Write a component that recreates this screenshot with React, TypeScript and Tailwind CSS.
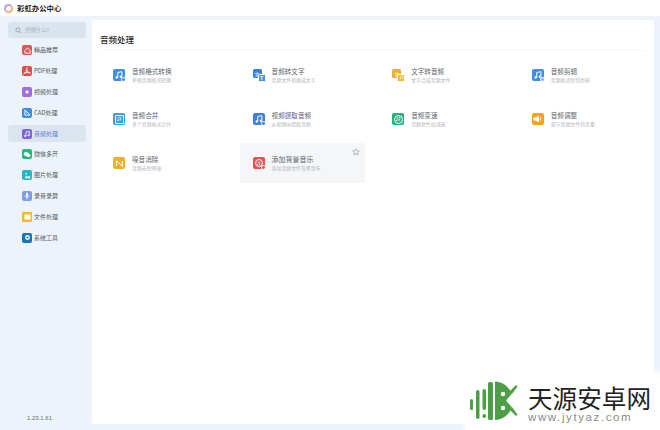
const F = '"Noto Sans CJK SC", "Liberation Sans", sans-serif';

function Note({ c = "#fff", s = 10 }: { c?: string; s?: number }) {
  return (
    <svg width={s} height={s} viewBox="0 0 12 12" fill="none">
      <path d="M4.5 9V3l5-1v6" stroke={c} strokeWidth="1.2" />
      <circle cx="3.2" cy="9" r="1.4" fill={c} />
      <circle cx="8.2" cy="8" r="1.4" fill={c} />
    </svg>
  );
}

function Box({ c, children, r = 2, s = 12 }: { c: string; children?: React.ReactNode; r?: number; s?: number }) {
  return (
    <div className="flex items-center justify-center shrink-0" style={{ width: s, height: s, background: c, borderRadius: r }}>
      {children}
    </div>
  );
}

const navIcons: Record<string, React.ReactNode> = {
  star: (
    <Box c="#dc5a56" s={10}>
      <svg width="7" height="7" viewBox="0 0 8 8" fill="none"><path d="M1 7V4l3-3 3 3v3z" stroke="#fff" strokeWidth="1" /></svg>
    </Box>
  ),
  pdf: (
    <Box c="#dd4f4b" s={10}>
      <svg width="8" height="8" viewBox="0 0 8 8" fill="none"><path d="M4 0.5c0 3-1.5 5.5-3.5 6.5M4 3c.8 2 2 3 3.5 3.2M1 6.5c2-1 4-1.3 6-.6" stroke="#fff" strokeWidth=".9" /></svg>
    </Box>
  ),
  video: (
    <Box c="#a36be0" s={10}>
      <svg width="6" height="6" viewBox="0 0 6 6"><rect x="1.5" y="1.5" width="3" height="3" rx="1" fill="#fff" /></svg>
    </Box>
  ),
  cad: (
    <Box c="#3f8ddb" s={10}>
      <svg width="7" height="7" viewBox="0 0 8 8" fill="none"><path d="M1 7h6M1 7V1l6 6M3 5V4" stroke="#fff" strokeWidth="1" /></svg>
    </Box>
  ),
  audio: <Box c="#7a66d8" s={10}><Note s={8} /></Box>,
  wx: (
    <Box c="#1fba7d" s={10}>
      <svg width="8" height="7" viewBox="0 0 8 7"><ellipse cx="3.2" cy="3" rx="2.6" ry="2" fill="#fff" /><ellipse cx="5.4" cy="4.4" rx="2" ry="1.6" fill="#fff" /></svg>
    </Box>
  ),
  img: (
    <Box c="#25b9c4" s={10}>
      <svg width="7" height="7" viewBox="0 0 8 8"><path d="M0.5 7l2.3-3 1.7 1.7L6 4l1.5 3z" fill="#fff" /><circle cx="2.5" cy="2" r=".9" fill="#fff" /></svg>
    </Box>
  ),
  rec: (
    <Box c="#7f9bea" s={10}>
      <svg width="6" height="8" viewBox="0 0 6 8" fill="none"><rect x="2" y="0.5" width="2" height="4.5" rx="1" fill="#fff" /><path d="M1 3.5c0 3 4 3 4 0M3 6v1.5" stroke="#fff" strokeWidth=".7" /></svg>
    </Box>
  ),
  file: (
    <Box c="#f5b82e" r={1} s={10}>
      <svg width="7" height="6" viewBox="0 0 7 6"><rect x="0.5" y="0.5" width="6" height="5" fill="#fff" /></svg>
    </Box>
  ),
  sys: (
    <Box c="#1276c4" s={10}>
      <svg width="7" height="7" viewBox="0 0 8 8" fill="none"><circle cx="4" cy="4" r="2" stroke="#fff" strokeWidth="1.5" /></svg>
    </Box>
  ),
};

const nav = [
  ["star", "精品推荐"],
  ["pdf", "PDF处理"],
  ["video", "视频处理"],
  ["cad", "CAD处理"],
  ["audio", "音频处理"],
  ["wx", "微信多开"],
  ["img", "图片处理"],
  ["rec", "录音录屏"],
  ["file", "文件处理"],
  ["sys", "系统工具"],
];

function Badge({ c }: { c: string }) {
  return <span className="absolute right-[-1px] bottom-[-1px] w-[5px] h-[5px] rounded-full border border-white" style={{ background: c }} />;
}

const tools: [string, string, React.ReactNode][] = [
  ["音频格式转换", "单视音频格式转换", <div className="relative"><Box c="#3e8fe6"><Note /></Box><Badge c="#3e8fe6" /></div>],
  ["音频转文字", "音频文件转换成文字", (
    <div className="relative w-[13px] h-[13px]">
      <div className="absolute left-0 top-0 w-[9px] h-[9px] rounded-[1.5px] bg-[#2b86db] flex items-center justify-center text-[5px] leading-none text-white">文</div>
      <div className="absolute right-0 bottom-0 w-[8px] h-[8px] rounded-[1.5px] bg-[#3e9bea] border border-white flex items-center justify-center text-[5px] leading-none text-white font-bold">T</div>
    </div>
  )],
  ["文字转音频", "文字合成音频文件", (
    <div className="relative w-[13px] h-[13px]">
      <div className="absolute left-0 top-0 w-[9px] h-[9px] rounded-[1.5px] bg-[#f3ad2c] flex items-center justify-center text-[5px] leading-none text-white">文</div>
      <div className="absolute right-0 bottom-0 w-[8px] h-[8px] rounded-[1.5px] bg-[#f5b53c] border border-white flex items-center justify-center"><Note s={5} /></div>
    </div>
  )],
  ["音频剪辑", "音频格式剪切剪辑", <div className="relative"><Box c="#3e8fe6"><Note /></Box><Badge c="#7fb6ec" /></div>],
  ["音频合并", "多个音频格式合并", <Box c="#3e9be6"><div className="w-[9px] h-[9px] border border-white rounded-[1px] flex items-center justify-center"><Note s={6} /></div></Box>],
  ["视频提取音频", "从视频中提取音频", <div className="relative"><Box c="#3e7fe0"><Note /></Box><Badge c="#3e7fe0" /></div>],
  ["音频变速", "音频文件加减速", (
    <Box c="#1fb57c">
      <div className="w-[9px] h-[9px] border border-white rounded-full flex items-center justify-center"><Note s={6} /></div>
    </Box>
  )],
  ["音频调整", "调节音频文件的音量", (
    <Box c="#f5a31f">
      <svg width="9" height="8" viewBox="0 0 9 8"><path d="M0.5 2.5h2L6 0.5v7L2.5 5.5h-2z" fill="#fff" /><rect x="7" y="2.5" width="1" height="3" fill="#fff" /></svg>
    </Box>
  )],
  ["噪音消除", "音频去除降噪", (
    <Box c="#f5ae27">
      <svg width="9" height="9" viewBox="0 0 9 9" fill="none"><path d="M1.5 7V2l6 5V2M1.5 1.5l6 6" stroke="#fff" strokeWidth=".8" /></svg>
    </Box>
  )],
  ["添加背景音乐", "添加音频文件背景音乐", (
    <div className="relative">
      <Box c="#e25555">
        <div className="w-[8px] h-[8px] border border-white rounded-full flex items-center justify-center"><Note s={5} /></div>
      </Box>
      <Badge c="#e25555" />
    </div>
  )],
];

export default function App() {
  return (
    <div className="relative w-[660px] h-[430px] overflow-hidden bg-[#ecf3fb] flex flex-col" style={{ fontFamily: F }}>
      <header className="h-[16px] bg-white flex items-center pl-[4px] gap-[4px] shrink-0">
        <div className="w-[9px] h-[9px] rounded-full border-[2px] border-[#b9a3e8] border-r-[#f2b56b] border-b-[#f2b56b]" />
        <span className="text-[7.4px] leading-none text-[#222] font-bold">彩虹办公中心</span>
      </header>
      <div className="flex flex-1 min-h-0 pt-[4px] pr-[6px] pb-[6px]">
        <aside className="w-[92px] shrink-0 flex flex-col pl-[8px] pr-[6px] pt-[2px]">
          <div className="h-[16px] rounded-[3px] bg-[#dbe4ee] flex items-center pl-[7px] gap-[3px] mb-[2px]">
            <svg width="7" height="7" viewBox="0 0 8 8" fill="none"><circle cx="3.4" cy="3.4" r="2.4" stroke="#8b97a5" strokeWidth=".9" /><path d="M5.3 5.3L7.3 7.3" stroke="#8b97a5" strokeWidth=".9" /></svg>
            <span className="text-[5.4px] text-[#a9b3be]">想做什么?</span>
          </div>
          {nav.map(([ic, label]) => {
            const active = label === "音频处理";
            return (
              <div key={label} className="h-[20.8px] flex items-center">
                <div className={`w-full pl-[14px] h-[17px] rounded-[3px] flex items-center ${active ? "bg-[#dce5ef]" : ""}`}>
                  {navIcons[ic]}
                  <span className={`ml-[2px] text-[6px] leading-none ${active ? "text-[#5b82d8]" : "text-[#55595f]"}`}>{label}</span>
                </div>
              </div>
            );
          })}
          <div className="mt-auto h-[12px] flex items-center pl-[19px] text-[6px] text-[#666b72]" style={{ fontFamily: '"Liberation Sans", sans-serif' }}>
            1.23.1.61
          </div>
        </aside>
        <main className="flex-1 bg-white rounded-[3px] px-[8px]">
          <h1 className="h-[31px] flex items-center pt-[8px] text-[8.5px] font-medium leading-none text-[#2a2a2a] border-b border-[#f7f7f7]">音频处理</h1>
          <div className="grid grid-cols-[125px_125px_125px_125px] gap-x-[14.6px] gap-y-[4px] mt-[4px] auto-rows-[40px]">
            {tools.map(([t, s, ic], i) => {
              const hover = i === 9;
              return (
                <div key={t} className={`relative flex items-center pl-[13px] gap-[6px] rounded-[2px] ${hover ? "bg-[#f5f6f8]" : ""}`}>
                  <div className="w-[13px] flex justify-start shrink-0">{ic}</div>
                  <div className="flex flex-col gap-[2px]">
                    <span className={`${hover ? "text-[7px]" : "text-[6.6px]"} leading-[8px] text-[#60646a] whitespace-nowrap`}>{t}</span>
                    <span className="text-[4.9px] leading-[6px] text-[#b0b4ba] whitespace-nowrap">{s}</span>
                  </div>
                  {hover && (
                    <svg className="absolute right-[5px] top-[5px]" width="8" height="8" viewBox="0 0 24 24" fill="none" stroke="#8f949a" strokeWidth="2">
                      <path d="M12 2.5l3 6.3 6.9.9-5 4.8 1.2 6.9L12 17.2l-6.1 3.2 1.2-6.9-5-4.8 6.9-.9z" />
                    </svg>
                  )}
                </div>
              );
            })}
          </div>
        </main>
      </div>

      <div className="absolute right-0 bottom-0 w-[192px] h-[54px] bg-white rounded-tl-[16px] shadow-[0_0_6px_4px_#fff] flex items-start pl-[2px] pt-[5px]">
        <svg width="48" height="40" viewBox="0 0 48 40" className="shrink-0">
          <g fill="#4c9f45">
            <rect x="0" y="18" width="3" height="11" rx="1.5" />
            <rect x="6" y="9" width="3.5" height="29" rx="1.7" />
            <rect x="12.5" y="8" width="3.5" height="21" rx="1.7" />
            <rect x="12.5" y="33" width="3.5" height="4" rx="1.7" />
            <rect x="18" y="1" width="5" height="38" rx="1.5" />
            <path d="M25 0.5c8 0 14 6 17 12l-6 7 6 7c-3 7-9 12.500-17 12.500z" />
            <path d="M40 10l6-6 1.500 1.500-5.500 7.500zM40 29l6 6 1.500-1.500-5.500-7.500z" />
          </g>
          <circle cx="33" cy="13" r="2.200" fill="#fff" />
          <circle cx="33" cy="27" r="2.200" fill="#fff" />
        </svg>
        <div className="flex flex-col ml-[10px] leading-none mt-[4px]">
          <span className="text-[24.6px] leading-[25px] text-[#222] whitespace-nowrap">天源安卓网</span>
          <span className="text-[11.5px] leading-[12px] mt-[1px] tracking-[1.6px] text-[#8a8a8a] whitespace-nowrap" style={{ fontFamily: '"Liberation Sans", sans-serif' }}>www.jytyaz.com</span>
        </div>
      </div>
    </div>
  );
}
